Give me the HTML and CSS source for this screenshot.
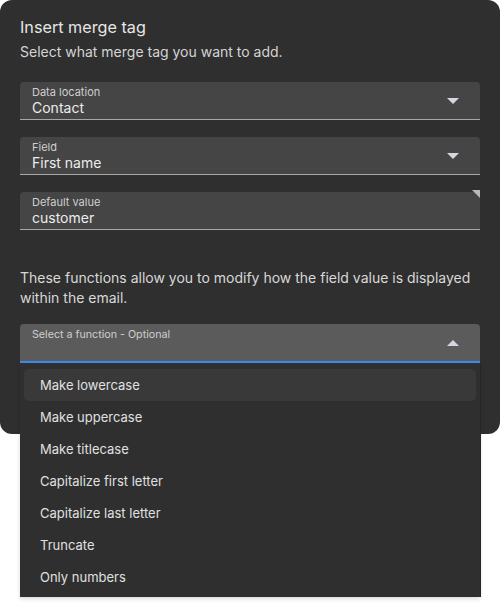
FILE: index.html
```html
<!DOCTYPE html>
<html>
<head>
<meta charset="utf-8">
<link rel="stylesheet" href="styles.css">
</head>
<body>
<div class="page">
<div class="dialog">
  <h2 class="title">Insert merge tag</h2>
  <p class="subtitle">Select what merge tag you want to add.</p>
  <div class="fields">
    <div class="field">
      <span class="label">Data location</span>
      <span class="value">Contact</span>
      <span class="arrow down"></span>
    </div>
    <div class="field">
      <span class="label">Field</span>
      <span class="value">First name</span>
      <span class="arrow down"></span>
    </div>
    <div class="field textarea">
      <span class="label">Default value</span>
      <span class="value">customer</span>
      <span class="resize"></span>
    </div>
  </div>
  <p class="desc">These functions allow you to modify how the field value is displayed within the email.</p>
  <div class="select-wrap">
    <div class="field active">
      <span class="label">Select a function - Optional</span>
      <span class="value"></span>
      <span class="arrow up"></span>
    </div>
    <ul class="menu">
      <li class="item hover">Make lowercase</li>
      <li class="item">Make uppercase</li>
      <li class="item">Make titlecase</li>
      <li class="item">Capitalize first letter</li>
      <li class="item">Capitalize last letter</li>
      <li class="item">Truncate</li>
      <li class="item">Only numbers</li>
    </ul>
  </div>
</div>
</div>
</body>
</html>
```
FILE: styles.css
```css
html, body {
  margin: 0;
  padding: 0;
  background: #ffffff;
}
html, body, .page {
  min-height: 607px;
}
body {
  font-family: Inter, "Noto Sans", sans-serif;
  color: #e2e2e2;
}
.page {
  width: 500px;
}
.dialog {
  width: 500px;
  box-sizing: border-box;
  background: #2f2f2f;
  border-radius: 12px;
  padding: 16px 20px 71px;
}
.title {
  margin: 0;
  font-size: 16.2px;
  line-height: 22px;
  font-weight: 400;
  color: #e6e6e6;
}
.subtitle {
  margin: 4px 0 0;
  font-size: 14px;
  line-height: 20px;
  color: #d4d4d4;
}
.fields {
  margin-top: 20px;
  display: flex;
  flex-direction: column;
  gap: 17px;
}
.field {
  position: relative;
  height: 38px;
  box-sizing: border-box;
  padding: 4px 12px 0;
  background: #454545;
  border-bottom: 1px solid #a8a8a8;
  border-radius: 4px 4px 0 0;
  display: flex;
  flex-direction: column;
}
.label {
  font-size: 11px;
  line-height: 13px;
  color: #cfcfcf;
}
.value {
  font-size: 14px;
  line-height: 18px;
  color: #ececec;
}
.arrow {
  position: absolute;
  right: 21px;
  top: 16px;
  width: 0;
  height: 0;
  border-left: 6px solid transparent;
  border-right: 6px solid transparent;
}
.arrow.down {
  border-top: 6px solid #d9d4e0;
}
.arrow.up {
  border-bottom: 6px solid #d9d4e0;
}
.resize {
  position: absolute;
  right: 0;
  top: -2px;
  width: 0;
  height: 0;
  border-top: 8px solid #b8b8b8;
  border-left: 8px solid transparent;
}
.desc {
  margin: 38px 0 0;
  font-size: 14px;
  line-height: 20px;
  color: #d8d8d8;
}
.select-wrap {
  position: relative;
  margin-top: 16px;
}
.field.active {
  height: 39px;
  background: #5b5b5b;
  border-bottom: 2px solid #3b8beb;
}
.field.active .label {
  font-size: 10.7px;
}
.menu {
  position: absolute;
  top: 100%;
  left: 0;
  right: 0;
  margin: 0;
  padding: 6px 4px 4px;
  list-style: none;
  background: #2f2f2f;
  box-shadow: 1px 0 0 #262626, 0 2px 4px rgba(0,0,0,0.15);
  z-index: 2;
}
.item {
  height: 32px;
  line-height: 32px;
  padding-left: 16px;
  font-size: 13px;
  color: #e0e0e0;
  border-radius: 5px;
}
.item.hover {
  background: #393939;
}
```
